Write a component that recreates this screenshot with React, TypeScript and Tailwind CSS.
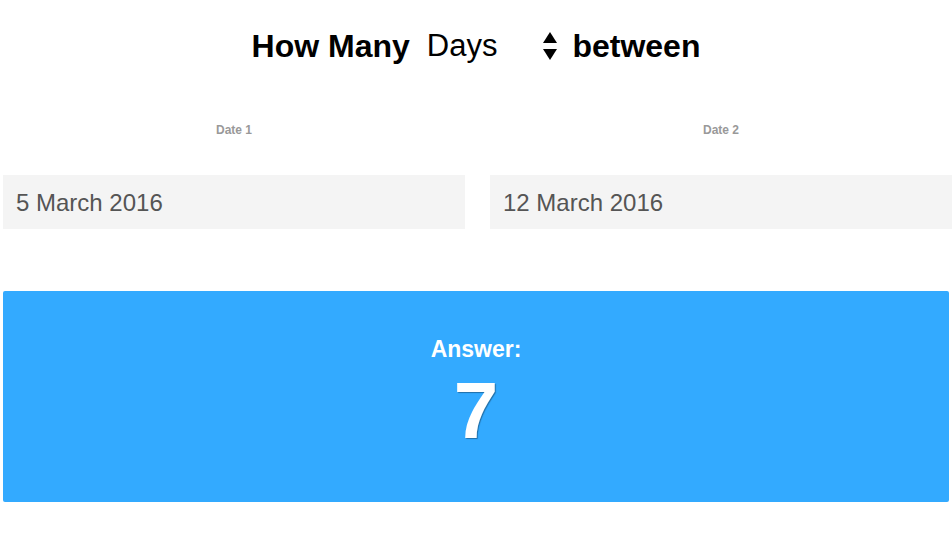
import React from "react";

const font = { fontFamily: '"Liberation Sans", Arial, sans-serif' };

const DateField = ({ label, value }: { label: string; value: string }) => (
  <div className="flex flex-1 flex-col items-center">
    <span className="h-[14px] text-[12px] font-bold leading-[14px] text-[#999]">{label}</span>
    <div className="mt-[38px] flex h-[54px] w-full items-center bg-[#f4f4f4] px-[13px] pt-[1px] text-[24px] text-[#555]">
      {value}
    </div>
  </div>
);

export default function App() {
  return (
    <div className="min-h-[535px] w-[952px] bg-white text-black" style={font}>
      <div className="flex h-[92px] items-center justify-center pb-[1px] text-[32px] leading-none">
        <span className="font-bold">How Many</span>
        <span className="ml-[17px] text-[31px]">Days</span>
        <svg className="ml-[45px]" width="16" height="32" viewBox="0 0 16 32">
          <path d="M8 2 L15 13 L1 13 Z" fill="#000" />
          <path d="M8 30 L15 19 L1 19 Z" fill="#000" />
        </svg>
        <span className="ml-[14px] font-bold">between</span>
      </div>
      <div className="flex gap-[25px] pl-[3px] pt-[31px]">
        <DateField label="Date 1" value="5 March 2016" />
        <DateField label="Date 2" value="12 March 2016" />
      </div>
      <div className="mt-[62px] ml-[3px] flex h-[211px] w-[946px] flex-col items-center rounded-[2px] bg-[#33aaff] pt-[44px] text-white">
        <span className="text-[23px] font-bold leading-[28px]">Answer:</span>
        <span
          className="mt-[8px] text-[80px] font-bold leading-[80px]"
          style={{ textShadow: "1px 1px 1px rgba(0,0,0,0.35)" }}
        >
          7
        </span>
      </div>
    </div>
  );
}
